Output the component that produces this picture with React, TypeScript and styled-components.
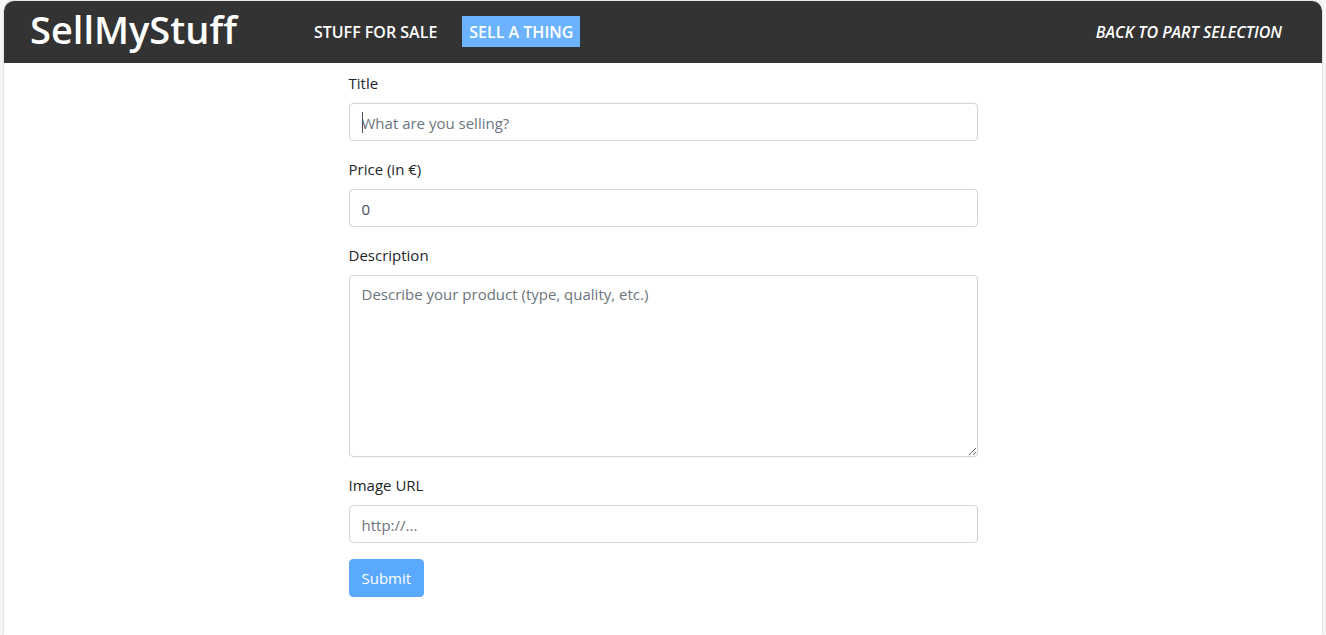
import React from "react";
import styled, { createGlobalStyle, css } from "styled-components";

const GlobalStyle = createGlobalStyle`
  *, *::before, *::after { box-sizing: border-box; }
  body {
    margin: 0;
    background: #f5f6f6;
    color: #212529;
    font-family: "Open Sans", "Noto Sans", sans-serif;
    font-size: 15px;
    line-height: 24px;
  }
`;

const Card = styled.div`
  min-height: calc(100vh - 1px);
  margin: 1px 4px 0;
  border-radius: 10px 10px 0 0;
  background: #fff;
  box-shadow: 0 0 2px rgba(0, 0, 0, 0.25);
`;

const Header = styled.header`
  display: flex;
  align-items: center;
  height: 62px;
  padding: 0 33px 2px 26px;
  border-radius: 10px 10px 0 0;
  background: #333;
`;

const Brand = styled.h1`
  margin: 0 70px 4px 0;
  color: #fff;
  font-size: 38px;
  font-weight: 600;
  line-height: 48px;
`;

const Nav = styled.nav`
  display: flex;
  flex: 1;
  gap: 18px;
`;

const NavLink = styled.a<{ $active?: boolean; $end?: boolean }>`
  padding: 4px 7px 3px;
  color: #fff;
  font-size: 16px;
  font-weight: 600;
  text-decoration: none;
  text-transform: uppercase;
  white-space: nowrap;
  ${(p) => p.$active && css`background: #6bb3ff;`}
  ${(p) => p.$end && css`margin-left: auto; font-style: italic;`}
`;

const Form = styled.form`
  width: 50%;
  margin: 0 auto;
  padding: 8px 15px;
`;

const Field = styled.div`
  margin-bottom: 16px;
`;

const Label = styled.label`
  display: block;
  width: max-content;
  margin-bottom: 8px;
`;

const control = css`
  display: block;
  width: 100%;
  padding: 6px 12px;
  border: 1px solid #ced4da;
  border-radius: 4px;
  outline: 0;
  background: #fff;
  color: #495057;
  font: inherit;
  &::placeholder { color: #6c757d; opacity: 1; }
`;

const Input = styled.input`
  ${control}
  height: 38px;
  padding: 7px 12px 5px;
`;

const TitleInputWrap = styled.div`
  position: relative;
  input { caret-color: transparent; }
  input:not(:placeholder-shown) { caret-color: auto; }
  input:not(:placeholder-shown) + span { display: none; }
`;

/* Steady text cursor over the start of the empty title input. */
const Caret = styled.span`
  position: absolute;
  top: 9px;
  left: 13px;
  width: 1px;
  height: 21px;
  background: #495057;
  pointer-events: none;
`;

const TextArea = styled.textarea`
  ${control}
  resize: vertical;
`;

const Submit = styled.button`
  padding: 6px 12px;
  border: 1px solid #5aa9ff;
  border-radius: 4px;
  background: #5aa9ff;
  color: #fff;
  font: inherit;
  cursor: pointer;
`;

export default function App() {
  return (
    <>
      <GlobalStyle />
      <Card>
        <Header>
          <Brand>SellMyStuff</Brand>
          <Nav>
            <NavLink href="#stuff">Stuff for sale</NavLink>
            <NavLink href="#sell" $active>Sell a thing</NavLink>
            <NavLink href="#parts" $end>Back to part selection</NavLink>
          </Nav>
        </Header>
        <main>
          <Form onSubmit={(e: React.FormEvent) => e.preventDefault()}>
            <Field>
              <Label htmlFor="title">Title</Label>
              <TitleInputWrap>
                <Input id="title" type="text" placeholder="What are you selling?" autoFocus />
                <Caret aria-hidden="true" />
              </TitleInputWrap>
            </Field>
            <Field>
              <Label htmlFor="price">Price (in €)</Label>
              <Input id="price" type="text" inputMode="decimal" defaultValue="0" />
            </Field>
            <Field>
              <Label htmlFor="description">Description</Label>
              <TextArea id="description" rows={7} placeholder="Describe your product (type, quality, etc.)" />
            </Field>
            <Field>
              <Label htmlFor="image">Image URL</Label>
              <Input id="image" type="text" placeholder="http://..." />
            </Field>
            <Submit type="submit">Submit</Submit>
          </Form>
        </main>
      </Card>
    </>
  );
}
